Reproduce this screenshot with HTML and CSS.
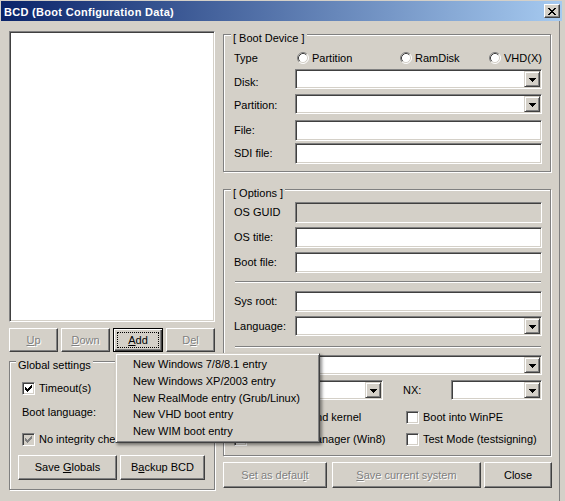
FILE: index.html
```html
<!DOCTYPE html>
<html>
<head>
<meta charset="utf-8">
<title>BCD (Boot Configuration Data)</title>
<link rel="stylesheet" href="styles.css">
</head>
<body>
<div class="window">
  <div class="titlebar">
    <span class="title">BCD (Boot Configuration Data)</span>
    <span class="tb-close"><svg width="8" height="7" viewBox="0 0 8 7" shape-rendering="crispEdges"><path d="M0 0h2v1h-2z M1 1h2v1h-2z M2 2h1v1h-1z M3 2h2v3h-2z M2 4h1v1h-1z M1 5h2v1h-2z M0 6h2v1h-2z M6 0h2v1h-2z M5 1h2v1h-2z M5 2h1v1h-1z M5 4h1v1h-1z M5 5h2v1h-2z M6 6h2v1h-2z"/></svg></span>
  </div>
  <div class="client">
    <div class="left">
      <div class="listbox sunken"></div>
      <div class="entry-buttons">
        <div class="btn disabled w49"><span><u>U</u>p</span></div>
        <div class="btn disabled w49"><span><u>D</u>own</span></div>
        <div class="btn default w50"><span class="focus"><u>A</u>dd</span></div>
        <div class="btn disabled w49"><span>D<u>e</u>l</span></div>
      </div>
      <fieldset class="group global">
        <legend class="gs-legend">Global settings</legend>
        <div class="global-body">
          <div class="g-row g-timeout">
            <span class="checkbox"><svg width="7" height="7" viewBox="0 0 7 7" shape-rendering="crispEdges"><path d="M0 2h1v3h-1z M1 3h1v3h-1z M2 4h1v3h-1z M3 3h1v3h-1z M4 2h1v3h-1z M5 1h1v3h-1z M6 0h1v3h-1z"/></svg></span>
            <span class="chk-text">Timeout(s)</span>
            <span class="text-field sunken timeout-field"></span>
          </div>
          <div class="g-row g-lang">
            <span class="g-label">Boot language:</span>
          </div>
          <div class="g-row g-integ">
            <span class="checkbox disabled-box"><svg width="7" height="7" viewBox="0 0 7 7" shape-rendering="crispEdges" fill="#808080"><path d="M0 2h1v3h-1z M1 3h1v3h-1z M2 4h1v3h-1z M3 3h1v3h-1z M4 2h1v3h-1z M5 1h1v3h-1z M6 0h1v3h-1z"/></svg></span>
            <span class="chk-text">No integrity checks</span>
          </div>
          <div class="g-buttons">
            <div class="btn save-globals"><span>Save <u>G</u>lobals</span></div>
            <div class="btn backup"><span>B<u>a</u>ckup BCD</span></div>
          </div>
        </div>
      </fieldset>
    </div>

    <div class="right">
      <fieldset class="group boot-device">
        <legend class="rt-legend">[ Boot Device ]</legend>
        <div class="group-body">
          <div class="type-row">
            <span class="lbl">Type</span>
            <span class="radio-item"><svg class="radio" width="12" height="12" viewBox="0 0 12 12"><circle cx="6" cy="6" r="5" fill="#fff"/><path d="M2.11 9.89A5.5 5.5 0 0 1 9.89 2.11" stroke="#808080" fill="none"/><path d="M9.89 2.11A5.5 5.5 0 0 1 2.11 9.89" stroke="#fff" fill="none"/><path d="M2.82 9.18A4.5 4.5 0 0 1 9.18 2.82" stroke="#404040" fill="none"/><path d="M9.18 2.82A4.5 4.5 0 0 1 2.82 9.18" stroke="#d4d0c8" fill="none"/></svg>Partition</span>
            <span class="radio-item"><svg class="radio" width="12" height="12" viewBox="0 0 12 12"><circle cx="6" cy="6" r="5" fill="#fff"/><path d="M2.11 9.89A5.5 5.5 0 0 1 9.89 2.11" stroke="#808080" fill="none"/><path d="M9.89 2.11A5.5 5.5 0 0 1 2.11 9.89" stroke="#fff" fill="none"/><path d="M2.82 9.18A4.5 4.5 0 0 1 9.18 2.82" stroke="#404040" fill="none"/><path d="M9.18 2.82A4.5 4.5 0 0 1 2.82 9.18" stroke="#d4d0c8" fill="none"/></svg>RamDisk</span>
            <span class="radio-item"><svg class="radio" width="12" height="12" viewBox="0 0 12 12"><circle cx="6" cy="6" r="5" fill="#fff"/><path d="M2.11 9.89A5.5 5.5 0 0 1 9.89 2.11" stroke="#808080" fill="none"/><path d="M9.89 2.11A5.5 5.5 0 0 1 2.11 9.89" stroke="#fff" fill="none"/><path d="M2.82 9.18A4.5 4.5 0 0 1 9.18 2.82" stroke="#404040" fill="none"/><path d="M9.18 2.82A4.5 4.5 0 0 1 2.82 9.18" stroke="#d4d0c8" fill="none"/></svg>VHD(X)</span>
          </div>
          <div class="row h20 mt4">
            <span class="lbl lbl-low">Disk:</span>
            <div class="combo sunken"><span class="combo-field"></span><span class="combo-btn"><svg width="7" height="4" viewBox="0 0 7 4" shape-rendering="crispEdges"><path d="M0 0h7v1h-7z M1 1h5v1h-5z M2 2h3v1h-3z M3 3h1v1h-1z"/></svg></span></div>
          </div>
          <div class="row h20 mt5">
            <span class="lbl lbl-low2">Partition:</span>
            <div class="combo sunken"><span class="combo-field"></span><span class="combo-btn"><svg width="7" height="4" viewBox="0 0 7 4" shape-rendering="crispEdges"><path d="M0 0h7v1h-7z M1 1h5v1h-5z M2 2h3v1h-3z M3 3h1v1h-1z"/></svg></span></div>
          </div>
          <div class="row h21 mt6">
            <span class="lbl">File:</span>
            <span class="text-field sunken grow"></span>
          </div>
          <div class="row h21 mt2">
            <span class="lbl">SDI file:</span>
            <span class="text-field sunken grow"></span>
          </div>
        </div>
      </fieldset>

      <fieldset class="group options">
        <legend class="rt-legend">[ Options ]</legend>
        <div class="group-body">
          <div class="row h21 mt10">
            <span class="lbl">OS GUID</span>
            <span class="text-field sunken grow readonly"></span>
          </div>
          <div class="row h21 mt4">
            <span class="lbl">OS title:</span>
            <span class="text-field sunken grow"></span>
          </div>
          <div class="row h21 mt4">
            <span class="lbl">Boot file:</span>
            <span class="text-field sunken grow"></span>
          </div>
          <div class="sep sep1"></div>
          <div class="row h21 mt8">
            <span class="lbl">Sys root:</span>
            <span class="text-field sunken grow"></span>
          </div>
          <div class="row h20 mt4">
            <span class="lbl">Language:</span>
            <div class="combo sunken"><span class="combo-field"></span><span class="combo-btn"><svg width="7" height="4" viewBox="0 0 7 4" shape-rendering="crispEdges"><path d="M0 0h7v1h-7z M1 1h5v1h-5z M2 2h3v1h-3z M3 3h1v1h-1z"/></svg></span></div>
          </div>
          <div class="sep sep2"></div>
          <div class="row h20 mt7">
            <span class="lbl"></span>
            <div class="combo sunken"><span class="combo-field"></span><span class="combo-btn"><svg width="7" height="4" viewBox="0 0 7 4" shape-rendering="crispEdges"><path d="M0 0h7v1h-7z M1 1h5v1h-5z M2 2h3v1h-3z M3 3h1v1h-1z"/></svg></span></div>
          </div>
          <div class="row h20 mt5">
            <span class="lbl"></span>
            <div class="combo sunken pae"><span class="combo-field"></span><span class="combo-btn"><svg width="7" height="4" viewBox="0 0 7 4" shape-rendering="crispEdges"><path d="M0 0h7v1h-7z M1 1h5v1h-5z M2 2h3v1h-3z M3 3h1v1h-1z"/></svg></span></div>
            <span class="nx-lbl">NX:</span>
            <div class="combo sunken"><span class="combo-field"></span><span class="combo-btn"><svg width="7" height="4" viewBox="0 0 7 4" shape-rendering="crispEdges"><path d="M0 0h7v1h-7z M1 1h5v1h-5z M2 2h3v1h-3z M3 3h1v1h-1z"/></svg></span></div>
          </div>
          <div class="chk-grid chk-row1">
            <span class="chk-item"><span class="checkbox"></span>Detect HAL and kernel</span>
            <span class="chk-item"><span class="checkbox"></span>Boot into WinPE</span>
          </div>
          <div class="chk-grid chk-row2">
            <span class="chk-item"><span class="checkbox"></span>Metro boot manager (Win8)</span>
            <span class="chk-item"><span class="checkbox"></span>Test Mode (testsigning)</span>
          </div>
        </div>
      </fieldset>

      <div class="bottom-buttons">
        <div class="btn disabled set-default"><span>Set as defau<u>l</u>t</span></div>
        <div class="btn disabled save-current"><span><u>S</u>ave current system</span></div>
        <div class="btn close-btn"><span>Close</span></div>
      </div>
    </div>
  </div>

  <div class="popup">
    <div class="mi">New Windows 7/8/8.1 entry</div>
    <div class="mi">New Windows XP/2003 entry</div>
    <div class="mi">New RealMode entry (Grub/Linux)</div>
    <div class="mi">New VHD boot entry</div>
    <div class="mi">New WIM boot entry</div>
  </div>
</div>
</body>
</html>
```

FILE: styles.css
```css
html, body {
  margin: 0;
  padding: 0;
  background: #d4d0c8;
}
body {
  font-family: "Liberation Sans", Arial, sans-serif;
  font-size: 11px;
  line-height: 13px;
  color: #000;
}
.window {
  position: relative;
  width: 565px;
  height: 501px;
  overflow: hidden;
  background: #d4d0c8;
}

/* title bar */
.titlebar {
  margin: 1px 3px 0 1px;
  height: 20px;
  box-sizing: border-box;
  padding: 0 2px 0 3px;
  background: linear-gradient(to right, #0a246a, #a6caf0);
  display: flex;
  align-items: center;
  justify-content: space-between;
}
.title {
  color: #fff;
  font-weight: bold;
  letter-spacing: 0.3px;
  line-height: 13px;
  margin-top: 3px;
}
.tb-close {
  width: 16px;
  height: 14px;
  box-sizing: border-box;
  background: #d4d0c8;
  border: 1px solid;
  border-color: #fff #404040 #404040 #fff;
  box-shadow: inset -1px -1px 0 #808080;
  display: flex;
  align-items: center;
  justify-content: center;
  padding-right: 1px;
}
.tb-close svg { display: block; }

/* client area */
.client {
  width: 560px;
  height: 480px;
  box-sizing: border-box;
  border-right: 1px solid #808080;
  padding: 10px 0 0 9px;
  display: grid;
  grid-template-columns: 206px 329px;
  column-gap: 8px;
  align-items: start;
}
.left, .right {
  display: flex;
  flex-direction: column;
}

/* 3D helpers */
.sunken {
  box-sizing: border-box;
  border: 1px solid;
  border-color: #808080 #fff #fff #808080;
  box-shadow: inset 1px 1px 0 #404040, inset -1px -1px 0 #d4d0c8;
  background: #fff;
}
.listbox {
  height: 291px;
}

/* buttons */
.btn {
  box-sizing: border-box;
  height: 24px;
  background: #d4d0c8;
  border: 1px solid;
  border-color: #fff #404040 #404040 #fff;
  box-shadow: inset -1px -1px 0 #808080;
  display: flex;
  align-items: center;
  justify-content: center;
  white-space: nowrap;
}
.btn.disabled {
  color: #808080;
  text-shadow: 1px 1px 0 #fff;
}
.btn.default {
  border-color: #000;
  box-shadow: inset 1px 1px 0 #fff, inset -1px -1px 0 #404040, inset -2px -2px 0 #808080;
  padding: 3px;
  align-items: stretch;
}
.btn .focus {
  flex: 1;
  border: 1px dotted #000;
  display: flex;
  align-items: center;
  justify-content: center;
}
.entry-buttons {
  margin-top: 6px;
  display: flex;
  gap: 3px;
}
.w49 { width: 49px; }
.w50 { width: 50px; }

/* group boxes */
.group {
  margin: 0;
  padding: 0;
  min-width: 0;
  box-sizing: border-box;
  border: 1px solid #808080;
  box-shadow: 1px 1px 0 #fff, inset 1px 1px 0 #fff;
}
.group legend {
  height: 5px;
  line-height: 13px;
  padding: 0 2px;
  background: #d4d0c8;
  white-space: nowrap;
}
.gs-legend { margin-left: 6px; }
.rt-legend { margin-left: 7px; }

.global {
  margin-top: 7px;
  height: 131px;
  width: 206px;
}
.global-body {
  padding-left: 12px;
}
.g-row {
  height: 13px;
  display: flex;
  align-items: center;
}
.g-timeout { margin-top: 18px; }
.g-lang { margin-top: 11px; }
.g-integ { margin-top: 14px; }
.timeout-field {
  width: 60px;
  height: 20px;
  margin-left: 32px;
  flex: none;
}
.chk-text { margin-left: 4px; white-space: nowrap; }
.g-buttons {
  margin-top: 9px;
  margin-left: -4px;
  display: flex;
  gap: 3px;
}
.g-buttons .btn { height: 25px; }
.save-globals { width: 99px; }
.backup { width: 85px; }

/* checkbox */
.checkbox {
  width: 13px;
  height: 13px;
  flex: none;
  box-sizing: border-box;
  border: 1px solid;
  border-color: #808080 #fff #fff #808080;
  box-shadow: inset 1px 1px 0 #404040, inset -1px -1px 0 #d4d0c8;
  background: #fff;
  padding: 2px 0 0 2px;
}
.checkbox svg { display: block; }
.checkbox.disabled-box { background: #d4d0c8; }

/* right side */
.boot-device {
  margin-top: 1px;
  width: 328px;
  height: 140px;
}
.options {
  margin-top: 15px;
  width: 328px;
  height: 269px;
}
.group-body {
  padding: 0 8px 0 10px;
}
.type-row {
  margin-top: 14px;
  height: 14px;
  display: grid;
  grid-template-columns: 63px 103px 89px 1fr;
  align-items: center;
}
.radio-item {
  display: flex;
  align-items: center;
  gap: 3px;
  white-space: nowrap;
}
.radio { display: block; flex: none; }
.row {
  display: flex;
  align-items: center;
}
.h20 { height: 20px; }
.h21 { height: 21px; }
.mt2 { margin-top: 2px; }
.mt4 { margin-top: 4px; }
.mt5 { margin-top: 5px; }
.mt6 { margin-top: 6px; }
.mt7 { margin-top: 7px; }
.mt8 { margin-top: 8px; }
.mt10 { margin-top: 10px; }
.lbl {
  width: 61px;
  flex: none;
  white-space: nowrap;
}
.lbl-low { padding-top: 6px; }
.lbl-low2 { padding-top: 2px; }
.grow { flex: 1; align-self: stretch; }
.text-field.readonly { background: #d4d0c8; }

.combo {
  flex: 1;
  align-self: stretch;
  display: flex;
  padding: 1px;
}
.combo.pae { flex: none; width: 88px; }
.combo-field { flex: 1; }
.combo-btn {
  width: 16px;
  height: 16px;
  flex: none;
  box-sizing: border-box;
  background: #d4d0c8;
  border: 1px solid;
  border-color: #d4d0c8 #404040 #404040 #d4d0c8;
  box-shadow: inset 1px 1px 0 #fff, inset -1px -1px 0 #808080;
  display: flex;
  align-items: center;
  justify-content: center;
  padding-top: 1px;
}
.combo-btn svg { display: block; }
.nx-lbl {
  width: 48px;
  margin-left: 20px;
  flex: none;
}

.sep {
  height: 0;
  border-top: 1px solid #808080;
  border-bottom: 1px solid #fff;
  margin: 0 1px;
}
.sep1 { margin-top: 8px; }
.sep2 { margin-top: 10px; }

.chk-grid {
  display: grid;
  grid-template-columns: 172px 1fr;
  height: 13px;
  align-items: center;
}
.chk-row1 { margin-top: 11px; }
.chk-row2 { margin-top: 9px; }
.chk-item {
  display: flex;
  align-items: center;
  gap: 4px;
  white-space: nowrap;
}

.bottom-buttons {
  margin-top: 6px;
  display: flex;
}
.bottom-buttons .btn { height: 26px; }
.set-default { width: 104px; }
.save-current { width: 149px; margin-left: 5px; }
.close-btn { width: 68px; margin-left: 3px; }

/* popup menu */
.popup {
  position: absolute;
  left: 115px;
  top: 353px;
  width: 205px;
  box-sizing: border-box;
  background: #d4d0c8;
  border: 1px solid;
  border-color: #d4d0c8 #404040 #404040 #d4d0c8;
  box-shadow: inset 1px 1px 0 #fff, inset -1px -1px 0 #808080, 2px 2px 3px rgba(0, 0, 0, 0.45);
  padding: 2px 0;
}
.mi {
  height: 16.75px;
  line-height: 16.75px;
  padding-left: 17px;
  white-space: nowrap;
}
```
